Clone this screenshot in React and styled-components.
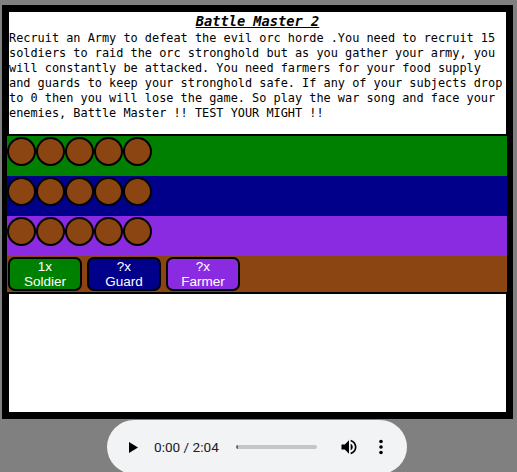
import React from "react";
import styled, { createGlobalStyle } from "styled-components";

const GlobalStyle = createGlobalStyle`
  body {
    margin: 0;
    background: #808080;
  }
`;

const Page = styled.div`
  padding: 5px 0 0 2px;
`;

const Frame = styled.div`
  width: 497px;
  height: 400px;
  border: 7px solid black;
  background: white;
`;

const Title = styled.h1`
  margin: 0;
  height: 19px;
  line-height: 19px;
  text-align: center;
  font-family: "DejaVu Sans Mono", monospace;
  font-size: 13.7px;
  font-weight: bold;
  font-style: italic;
  text-decoration: underline;
  color: black;
`;

const Intro = styled.p`
  margin: 0;
  font-family: "DejaVu Sans Mono", monospace;
  font-size: 11.88px;
  line-height: 15px;
  color: black;
`;

const Board = styled.div`
  margin: 13px -1px 0 -2px;
  border-top: 2px solid black;
  border-bottom: 2px solid black;
`;

const Lane = styled.div`
  display: flex;
  align-items: flex-start;
  height: 40px;
  padding-top: 1px;
  box-sizing: border-box;
  background: ${(p) => p.$color};
`;

const Unit = styled.div`
  width: 25px;
  height: 25px;
  border: 2px solid black;
  border-radius: 50%;
  background: #8b4513;
`;

const Shop = styled.div`
  display: flex;
  gap: 5px;
  height: 36px;
  padding: 1px;
  box-sizing: border-box;
  background: #8b4513;
`;

const Recruit = styled.button`
  width: 74px;
  height: 34px;
  padding: 0;
  border: 2px solid black;
  border-radius: 7px;
  background: ${(p) => p.$color};
  color: white;
  font-family: "Liberation Sans", Arial, sans-serif;
  font-size: 13.5px;
  line-height: 15px;
  text-align: center;
`;

const Player = styled.div`
  display: flex;
  align-items: center;
  width: 300px;
  height: 54px;
  margin: 1px 0 0 105px;
  padding-left: 22px;
  box-sizing: border-box;
  border-radius: 27px;
  background: #f1f3f4;
`;

const Time = styled.span`
  flex: 0 0 66px;
  margin-left: 16px;
  font-family: Roboto, "Liberation Sans", sans-serif;
  font-size: 13.6px;
  color: #202124;
  white-space: nowrap;
`;

const Track = styled.div`
  flex: 0 0 81px;
  height: 4px;
  margin-left: 16px;
  border-radius: 2px;
  background: #c4c7c5;
  border-left: 2px solid #5f6368;
  box-sizing: border-box;
`;

const Icon = styled.svg`
  flex: none;
  margin-left: ${(p) => p.$gap || 0}px;
`;

const lanes = ["#008000", "#00008b", "#8a2be2"];
const units = [0, 1, 2, 3, 4];
const buttons = [
  { count: "1x", name: "Soldier", color: "#008000" },
  { count: "?x", name: "Guard", color: "#00008b" },
  { count: "?x", name: "Farmer", color: "#8a2be2" },
];

export default function App() {
  return (
    <Page>
      <GlobalStyle />
      <Frame>
        <Title>Battle Master 2</Title>
        <Intro>
          Recruit an Army to defeat the evil orc horde .You need to recruit 15
          soldiers to raid the orc stronghold but as you gather your army, you
          will constantly be attacked. You need farmers for your food supply
          and guards to keep your stronghold safe. If any of your subjects drop
          to 0 then you will lose the game. So play the war song and face your
          enemies, Battle Master !! TEST YOUR MIGHT !!
        </Intro>
        <Board>
          {lanes.map((c) => (
            <Lane key={c} $color={c}>
              {units.map((u) => (
                <Unit key={u} />
              ))}
            </Lane>
          ))}
          <Shop>
            {buttons.map((b) => (
              <Recruit key={b.name} $color={b.color}>
                {b.count}
                <br />
                {b.name}
              </Recruit>
            ))}
          </Shop>
        </Board>
      </Frame>
      <Player>
        <Icon width="9" height="11" viewBox="0 0 9 11">
          <path d="M0 0 L9 5.5 L0 11 Z" fill="black" />
        </Icon>
        <Time>0:00 / 2:04</Time>
        <Track />
        <Icon $gap={22} width="20" height="20" viewBox="0 0 24 24">
          <path
            d="M3 9v6h4l5 5V4L7 9H3zm13.5 3c0-1.77-1.02-3.29-2.5-4.03v8.05c1.48-.73 2.5-2.25 2.5-4.02zM14 3.23v2.06c2.89.86 5 3.54 5 6.71s-2.11 5.85-5 6.71v2.06c4.01-.91 7-4.49 7-8.77s-2.99-7.86-7-8.77z"
            fill="black"
          />
        </Icon>
        <Icon $gap={20} width="4" height="16" viewBox="0 0 4 16">
          <circle cx="2" cy="2.5" r="1.8" fill="black" />
          <circle cx="2" cy="8" r="1.8" fill="black" />
          <circle cx="2" cy="13.5" r="1.8" fill="black" />
        </Icon>
      </Player>
    </Page>
  );
}
